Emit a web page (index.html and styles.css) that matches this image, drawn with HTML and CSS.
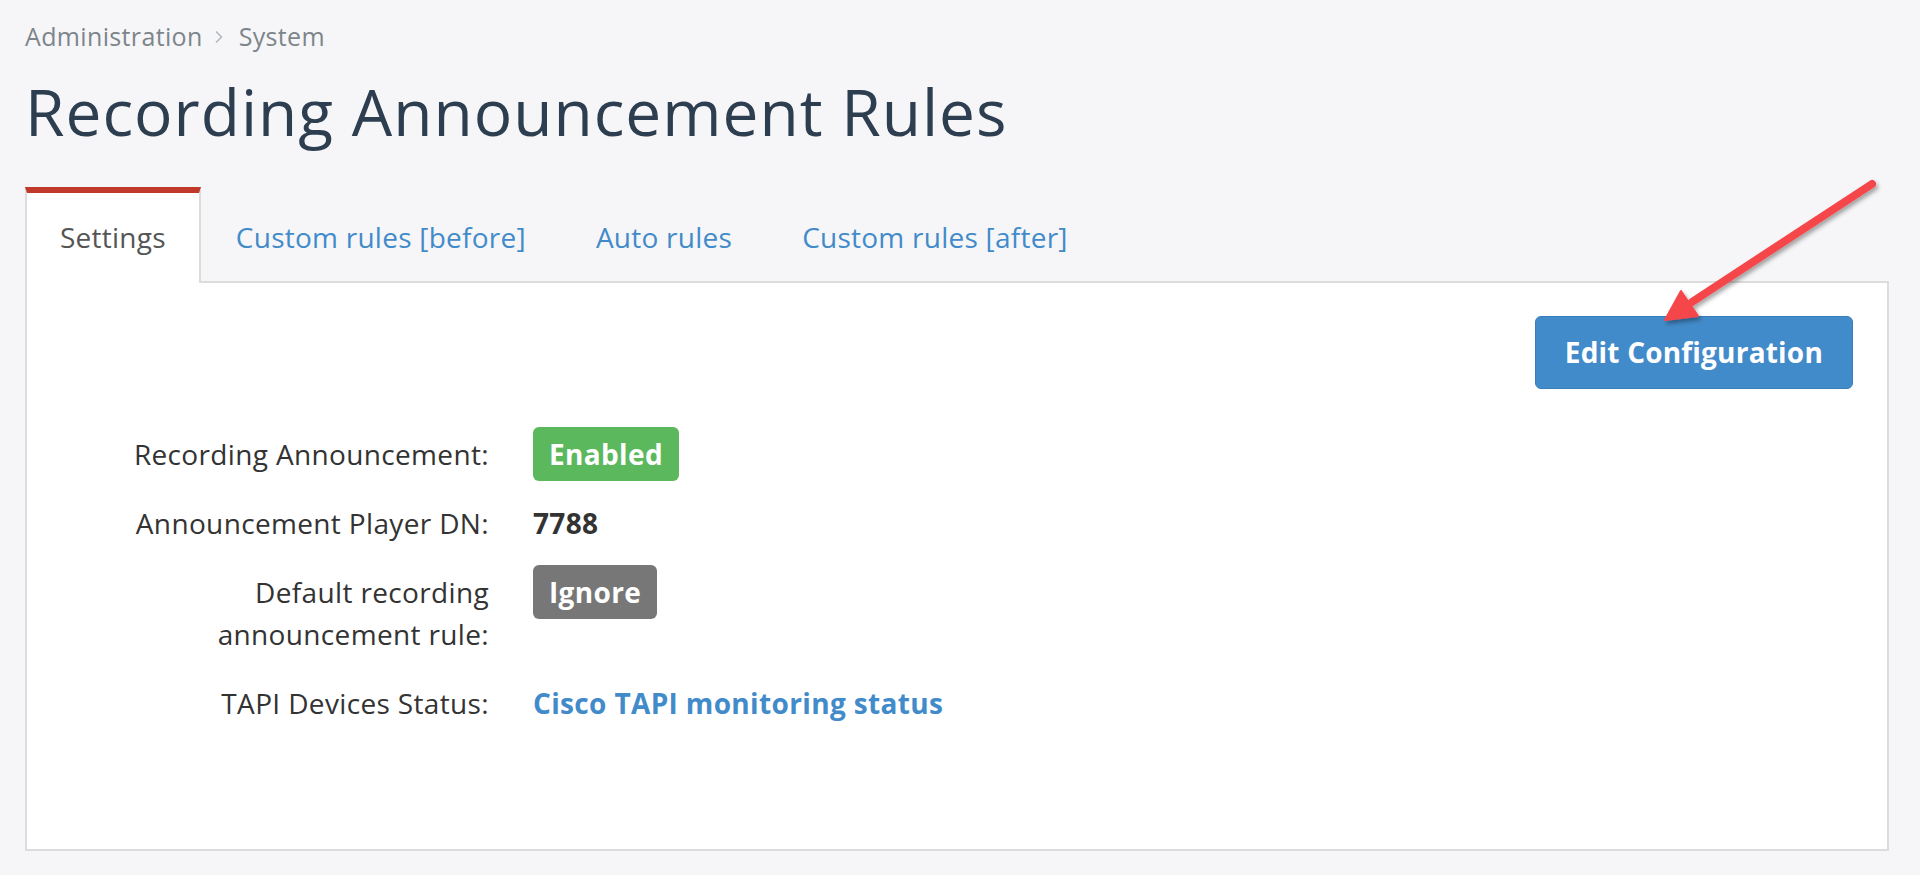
FILE: index.html
```html
<!DOCTYPE html>
<html lang="en">
<head>
    <meta charset="UTF-8">
    <meta name="viewport" content="width=device-width, initial-scale=1.0">
    <title>Recording Announcement Rules</title>
    <link rel="stylesheet" href="styles.css">
</head>
<body>
    <div class="page">
        <nav class="breadcrumb">
            <a href="#">Administration</a>
            <svg class="crumb-sep" width="10" height="14" viewBox="0 0 10 14">
                <path d="M2 1.5 L7.5 7 L2 12.5" fill="none" stroke="#b3b9bf" stroke-width="1.6"/>
            </svg>
            <a href="#">System</a>
        </nav>

        <h1>Recording Announcement Rules</h1>

        <ul class="tabs">
            <li class="tab active">Settings</li>
            <li class="tab"><a href="#">Custom rules [before]</a></li>
            <li class="tab"><a href="#">Auto rules</a></li>
            <li class="tab"><a href="#">Custom rules [after]</a></li>
        </ul>

        <div class="panel">
            <div class="toolbar">
                <button class="btn-edit">Edit Configuration</button>
            </div>

            <div class="form">
                <div class="form-row">
                    <div class="label">Recording Announcement:</div>
                    <div class="value"><span class="badge badge-success">Enabled</span></div>
                </div>
                <div class="form-row">
                    <div class="label">Announcement Player DN:</div>
                    <div class="value"><strong>7788</strong></div>
                </div>
                <div class="form-row">
                    <div class="label">Default recording announcement rule:</div>
                    <div class="value"><span class="badge badge-default">Ignore</span></div>
                </div>
                <div class="form-row">
                    <div class="label">TAPI Devices Status:</div>
                    <div class="value"><a class="link" href="#">Cisco TAPI monitoring status</a></div>
                </div>
            </div>
        </div>
    </div>

    <!-- callout arrow pointing at the edit button -->
    <svg class="callout" width="1920" height="875" viewBox="0 0 1920 875">
        <defs>
            <filter id="arrowShadow" x="-20%" y="-20%" width="140%" height="140%">
                <feDropShadow dx="2" dy="3" stdDeviation="2" flood-color="#000" flood-opacity="0.35"/>
            </filter>
        </defs>
        <g filter="url(#arrowShadow)" fill="#f5474a" stroke="#f5474a">
            <line x1="1872" y1="184" x2="1692" y2="302" stroke-width="8" stroke-linecap="round"/>
            <polygon points="1665,320 1681,291 1698,316" stroke-width="2" stroke-linejoin="round"/>
        </g>
    </svg>
</body>
</html>
```

FILE: styles.css
```css
* {
    margin: 0;
    padding: 0;
    box-sizing: border-box;
}

body {
    font-family: "Open Sans", "Liberation Sans", sans-serif;
    background-color: #f6f6f8;
    color: #333;
    letter-spacing: 0.35px;
}

a {
    text-decoration: none;
}

.page {
    padding: 18px 31px 0 25px;
}

.breadcrumb {
    display: flex;
    align-items: center;
    font-size: 25px;
    line-height: 1.5;
}

.breadcrumb a {
    color: #7d858b;
}

.crumb-sep {
    margin: 0 15px 0 11px;
}

h1 {
    margin-top: 17px;
    font-size: 64px;
    font-weight: 400;
    line-height: 77px;
    letter-spacing: 1px;
    color: #2c3e50;
}

.tabs {
    display: flex;
    list-style: none;
    margin-top: 37px;
}

.tab {
    font-size: 28px;
    line-height: 42px;
    letter-spacing: 0.25px;
    padding: 23px 33px;
    border-top: 6px solid transparent;
    border-left: 2px solid transparent;
    border-right: 2px solid transparent;
}

.tab a {
    color: #428bca;
}

.tab.active {
    position: relative;
    z-index: 1;
    color: #555;
    background-color: #fff;
    border-top-color: #c0392b;
    border-left-color: #dcdcdc;
    border-right-color: #dcdcdc;
    padding-bottom: 25px;
    margin-bottom: -2px;
}

.panel {
    height: 570px;
    background-color: #fff;
    border: 2px solid #dcdcdc;
    padding: 33px 34px 0 0;
}

.toolbar {
    display: flex;
    justify-content: flex-end;
}

.btn-edit {
    font-family: inherit;
    font-size: 28px;
    font-weight: 700;
    line-height: 43px;
    letter-spacing: 0.2px;
    padding: 14px 29px;
    color: #fff;
    background-color: #428bca;
    border: 1px solid #3a7dbb;
    border-radius: 6px;
    cursor: pointer;
}

.form {
    margin-top: 38px;
    padding-left: 62px;
    font-size: 28px;
    line-height: 42px;
}

.form-row {
    display: grid;
    grid-template-columns: 400px 1fr;
    column-gap: 44px;
    margin-bottom: 15px;
}

.label {
    padding: 6px 0;
    text-align: right;
    color: #333;
}

.value {
    display: flex;
    align-items: flex-start;
    padding: 6px 0;
    color: #333;
}

.value strong {
    font-weight: 700;
}

.badge {
    margin: -6px 0;
    padding: 6px 16px;
    border-radius: 6px;
    color: #fff;
    font-weight: 700;
}

.badge-success {
    background-color: #5cb85c;
}

.badge-default {
    background-color: #777;
}

.link {
    color: #428bca;
    font-weight: 700;
}

.callout {
    position: absolute;
    top: 0;
    left: 0;
    pointer-events: none;
}
```
